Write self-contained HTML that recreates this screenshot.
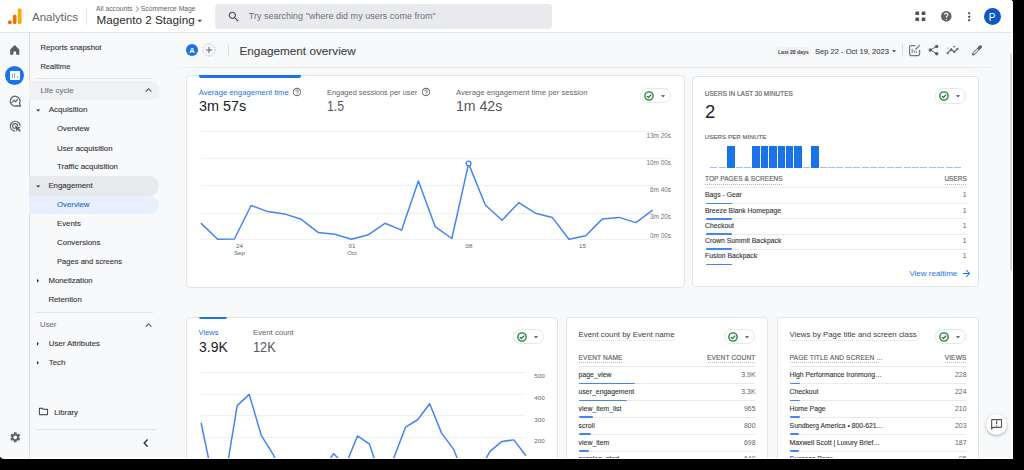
<!DOCTYPE html>
<html><head><meta charset="utf-8"><title>Analytics</title>
<style>
html,body{margin:0;padding:0;width:1024px;height:470px;overflow:hidden;background:#000;}
body{font-family:"Liberation Sans",sans-serif;position:relative;}
.t{position:absolute;line-height:1;white-space:nowrap;}
.sb{-webkit-text-stroke:0.1px currentColor;}
.hd{-webkit-text-stroke:0.15px currentColor;}
.r{position:absolute;}
#screen{position:absolute;left:0;top:0;width:1012px;height:458px;background:#f8f9fa;overflow:hidden;border-bottom-left-radius:6px 1.2px;box-shadow:1px 1px 0 #fff;}
.card{position:absolute;background:#fff;border:1px solid #e3e4e6;border-radius:4px;box-sizing:border-box;}
.pill{position:absolute;background:#fff;border:1px solid #e6e7e9;border-radius:8px;box-sizing:border-box;}
</style></head><body><div id="screen">

<div class="r" style="left:0.00px;top:0.00px;width:1013.00px;height:32.00px;background:#fff;border-bottom:1px solid #e3e4e6;box-sizing:border-box;height:33px;"></div>
<svg class="r" style="left:0;top:0;width:30px;height:30px" viewBox="0 0 30 30"><circle cx="9.85" cy="22.15" r="2.0" fill="#e37400"/><rect x="12.9" y="14.4" width="3.6" height="9.8" rx="1.8" fill="#e37400"/><rect x="17.8" y="8.3" width="3.8" height="15.9" rx="1.9" fill="#f9ab00"/></svg>
<div class="t " style="left:32.00px;top:11.60px;font-size:11.5px;color:#5f6368;font-weight:400;">Analytics</div>
<div class="r" style="left:86.20px;top:8.00px;width:1.00px;height:16.50px;background:#e3e3e3;"></div>
<div class="t " style="left:96.10px;top:6.10px;font-size:6.75px;color:#5f6368;font-weight:400;">All accounts</div>
<svg class="r" style="left:134.5px;top:6px;width:5px;height:6px" viewBox="0 0 5 6"><path d="M1.2 0.7L3.6 3L1.2 5.3" fill="none" stroke="#5f6368" stroke-width="0.9"/></svg>
<div class="t " style="left:140.80px;top:6.10px;font-size:6.75px;color:#5f6368;font-weight:400;">Scommerce Mage</div>
<div class="t " style="left:96.60px;top:13.80px;font-size:11.7px;color:#2a2b2e;font-weight:400;">Magento 2 Staging</div>
<svg class="r" style="left:193.90px;top:14.60px;width:11.50px;height:11.50px;" viewBox="0 0 24 24"><path fill="#444746" d="M7 10l5 5 5-5z"/></svg>
<div class="r" style="left:215.20px;top:3.60px;width:337.00px;height:25.00px;background:#e9eaee;border-radius:4px;"></div>
<svg class="r" style="left:227.00px;top:9.60px;width:13.50px;height:13.50px;" viewBox="0 0 24 24"><path fill="#444746" d="M15.5 14h-.79l-.28-.27C15.41 12.59 16 11.11 16 9.5 16 5.91 13.09 3 9.5 3S3 5.91 3 9.5 5.91 16 9.5 16c1.61 0 3.09-.59 4.23-1.57l.27.28v.79l5 4.99L20.49 19l-4.99-5zm-6 0C7.01 14 5 11.99 5 9.5S7.01 5 9.5 5 14 7.01 14 9.5 11.99 14 9.5 14z"/></svg>
<div class="t " style="left:248.70px;top:12.00px;font-size:9.05px;color:#6d7176;font-weight:400;">Try searching "where did my users come from"</div>
<svg class="r" style="left:910px;top:6px;width:20px;height:20px" viewBox="910 6 20 20"><g fill="#505357"><rect x="915.4" y="11.4" width="3.7" height="3.6" rx="0.5"/><rect x="921.7" y="11.4" width="3.7" height="3.6" rx="0.5"/><rect x="915.4" y="17.5" width="3.7" height="3.6" rx="0.5"/><rect x="921.7" y="17.5" width="3.7" height="3.6" rx="0.5"/></g></svg>
<svg class="r" style="left:939.70px;top:10.00px;width:12.60px;height:12.60px;" viewBox="0 0 24 24"><path fill="#5f6368" d="M12 2C6.48 2 2 6.48 2 12s4.48 10 10 10 10-4.480 10-10S17.52 2 12 2zm1 17h-2v-2h2v2zm2.07-7.75l-.9.92C13.45 12.9 13 13.5 13 15h-2v-.5c0-1.1.45-2.1 1.17-2.83l1.24-1.26c.37-.36.59-.86.59-1.41 0-1.1-.9-2-2-2s-2 .9-2 2H8c0-2.21 1.79-4 4-4s4 1.79 4 4c0 .88-.36 1.68-.93 2.25z"/></svg>
<svg class="r" style="left:960px;top:6px;width:20px;height:20px" viewBox="960 6 20 20"><g fill="#3c4043"><rect x="968.2" y="12.3" width="1.9" height="1.9" rx="0.4"/><rect x="968.2" y="15.8" width="1.9" height="1.9" rx="0.4"/><rect x="968.2" y="19.3" width="1.9" height="1.9" rx="0.4"/></g></svg>
<div class="r" style="left:983.50px;top:7.80px;width:17.20px;height:17.20px;background:#0d5bc0;border-radius:50%;"></div>
<div class="t " style="left:992.20px;top:12.80px;font-size:10px;color:#fff;font-weight:400;width:0;display:flex;justify-content:center;">P</div>
<div class="r" style="left:29.00px;top:33.00px;width:1.00px;height:426.00px;background:#dadce0;"></div>
<svg class="r" style="left:0;top:0;width:30px;height:60px" viewBox="0 0 30 60"><path d="M10.2 49.6L14.75 45.1L19.3 49.6V54.8H16.1V51.6H13.4V54.8H10.2Z" fill="#5b5f64"/></svg>
<div class="r" style="left:5.30px;top:66.00px;width:19.00px;height:19.00px;background:#1a73e8;border-radius:50%;"></div>
<div class="r" style="left:10.00px;top:70.90px;width:9.90px;height:9.30px;background:#fff;border-radius:0.8px;"></div>
<div class="r" style="left:12.10px;top:74.30px;width:1.10px;height:3.70px;background:#7aa7f0;"></div>
<div class="r" style="left:14.30px;top:72.60px;width:1.10px;height:5.40px;background:#7aa7f0;"></div>
<div class="r" style="left:16.50px;top:75.60px;width:1.10px;height:2.40px;background:#7aa7f0;"></div>
<svg class="r" style="left:0;top:90px;width:30px;height:50px" viewBox="0 90 30 50"><path d="M19.6 103.2A4.9 4.9 0 1 0 17.2 105.6L20.3 106.4Z" fill="none" stroke="#5b5f64" stroke-width="1.25" stroke-linejoin="round"/><path d="M11.9 102.6l2.1-2.2 1.6 1.3 2.3-2.5" fill="none" stroke="#5b5f64" stroke-width="1.2"/><path d="M15.2 131.1A4.9 4.9 0 1 1 20.1 126.2" fill="none" stroke="#5b5f64" stroke-width="1.15"/><path d="M15.1 128.6A2.5 2.5 0 1 1 17.6 126.1" fill="none" stroke="#5b5f64" stroke-width="1.1"/><path d="M14.6 125.5L20.8 127.7L18.6 128.5L20.9 130.8L19.8 131.9L17.5 129.6L16.7 131.8Z" fill="#5b5f64"/></svg>
<svg class="r" style="left:8.50px;top:431.30px;width:12.50px;height:12.50px;" viewBox="0 0 24 24"><path fill="#5f6368" d="M19.14 12.94c.04-.3.06-.61.06-.94 0-.32-.02-.64-.07-.94l2.03-1.58c.18-.14.23-.41.12-.61l-1.92-3.32c-.12-.22-.37-.29-.59-.22l-2.39.96c-.5-.38-1.03-.7-1.62-.94l-.36-2.54c-.04-.24-.24-.41-.48-.41h-3.84c-.24 0-.43.17-.47.41l-.36 2.54c-.59.24-1.13.57-1.62.94l-2.39-.96c-.22-.08-.47 0-.59.22L2.74 8.87c-.12.21-.08.47.12.61l2.03 1.58c-.05.3-.09.63-.09.94s.02.64.07.94l-2.03 1.58c-.18.14-.23.41-.12.61l1.92 3.32c.12.22.37.29.59.22l2.39-.96c.5.38 1.030.7 1.62.94l.36 2.54c.05.24.24.41.48.41h3.84c.24 0 .44-.17.47-.41l.36-2.54c.59-.24 1.13-.56 1.62-.94l2.39.96c.22.08.47 0 .59-.22l1.92-3.32c.12-.22.07-.47-.12-.61l-2.01-1.58zM12 15.6c-1.98 0-3.6-1.62-3.6-3.6s1.62-3.6 3.6-3.6 3.6 1.62 3.6 3.6-1.62 3.6-3.6 3.6z"/></svg>
<div class="t sb" style="left:40.40px;top:43.90px;font-size:7.8px;color:#303134;font-weight:400;">Reports snapshot</div>
<div class="t sb" style="left:40.40px;top:62.60px;font-size:7.6px;color:#303134;font-weight:400;">Realtime</div>
<div class="r" style="left:36.00px;top:78.00px;width:117.00px;height:1.00px;background:#e3e3e3;"></div>
<div class="r" style="left:29.00px;top:81.00px;width:131.00px;height:19.00px;background:#f0f1f3;border-radius:0 10px 10px 0;"></div>
<div class="t sb" style="left:40.40px;top:87.10px;font-size:8px;color:#6f7378;font-weight:400;">Life cycle</div>
<svg class="r" style="left:144px;top:86px;width:9px;height:8px" viewBox="0 0 9 8"><path d="M1.6 5.6L4.5 2.8L7.4 5.6" fill="none" stroke="#5f6368" stroke-width="1.3"/></svg>
<svg class="r" style="left:32.60px;top:104.80px;width:10.50px;height:10.50px;" viewBox="0 0 24 24"><path fill="#303134" d="M7 10l5 5 5-5z"/></svg>
<div class="t sb" style="left:48.70px;top:106.30px;font-size:8px;color:#303134;font-weight:400;">Acquisition</div>
<div class="t sb" style="left:57.00px;top:125.40px;font-size:7.8px;color:#303134;font-weight:400;">Overview</div>
<div class="t sb" style="left:57.00px;top:144.60px;font-size:7.8px;color:#303134;font-weight:400;">User acquisition</div>
<div class="t sb" style="left:57.00px;top:163.40px;font-size:7.9px;color:#303134;font-weight:400;">Traffic acquisition</div>
<div class="r" style="left:29.00px;top:176.20px;width:130.00px;height:19.50px;background:#e8e9ec;border-radius:0 10px 10px 0;"></div>
<svg class="r" style="left:32.60px;top:180.60px;width:10.50px;height:10.50px;" viewBox="0 0 24 24"><path fill="#303134" d="M7 10l5 5 5-5z"/></svg>
<div class="t sb" style="left:48.40px;top:182.10px;font-size:7.8px;color:#303134;font-weight:400;">Engagement</div>
<div class="r" style="left:29.00px;top:195.60px;width:130.00px;height:18.90px;background:#e8f0fe;border-radius:0 10px 10px 0;"></div>
<div class="t sb" style="left:57.00px;top:200.90px;font-size:7.8px;color:#1967d2;font-weight:400;">Overview</div>
<div class="t sb" style="left:57.00px;top:220.10px;font-size:7.8px;color:#303134;font-weight:400;">Events</div>
<div class="t sb" style="left:57.00px;top:239.20px;font-size:7.8px;color:#303134;font-weight:400;">Conversions</div>
<div class="t sb" style="left:57.00px;top:258.40px;font-size:7.6px;color:#303134;font-weight:400;">Pages and screens</div>
<svg class="r" style="left:32.80px;top:275.80px;width:9.50px;height:9.50px;" viewBox="0 0 24 24"><path fill="#303134" d="M10 17l5-5-5-5v10z"/></svg>
<div class="t sb" style="left:48.40px;top:277.10px;font-size:7.8px;color:#303134;font-weight:400;">Monetization</div>
<div class="t sb" style="left:48.40px;top:296.30px;font-size:7.8px;color:#303134;font-weight:400;">Retention</div>
<div class="r" style="left:35.60px;top:311.50px;width:117.00px;height:1.00px;background:#e3e3e3;"></div>
<div class="t sb" style="left:40.00px;top:321.20px;font-size:7.8px;color:#6f7378;font-weight:400;">User</div>
<svg class="r" style="left:144px;top:321px;width:9px;height:8px" viewBox="0 0 9 8"><path d="M1.6 5.6L4.5 2.8L7.4 5.6" fill="none" stroke="#5f6368" stroke-width="1.3"/></svg>
<svg class="r" style="left:32.80px;top:338.80px;width:9.50px;height:9.50px;" viewBox="0 0 24 24"><path fill="#303134" d="M10 17l5-5-5-5v10z"/></svg>
<div class="t sb" style="left:48.80px;top:339.90px;font-size:7.8px;color:#303134;font-weight:400;">User Attributes</div>
<svg class="r" style="left:32.80px;top:358.30px;width:9.50px;height:9.50px;" viewBox="0 0 24 24"><path fill="#303134" d="M10 17l5-5-5-5v10z"/></svg>
<div class="t sb" style="left:48.80px;top:359.40px;font-size:7.8px;color:#303134;font-weight:400;">Tech</div>
<svg class="r" style="left:37.50px;top:405.50px;width:11.00px;height:11.00px;" viewBox="0 0 24 24"><path fill="#303134" d="M9.17 6l2 2H20v10H4V6h5.17M10 4H4c-1.1 0-1.99.9-1.99 2L2 18c0 1.1.9 2 2 2h16c1.1 0 2-.9 2-2V8c0-1.1-.9-2-2-2h-8l-2-2z"/></svg>
<div class="t sb" style="left:54.20px;top:408.60px;font-size:7.8px;color:#303134;font-weight:400;">Library</div>
<div class="r" style="left:36.00px;top:428.50px;width:121.00px;height:1.00px;background:#e3e3e3;"></div>
<svg class="r" style="left:141px;top:438px;width:9px;height:10px" viewBox="0 0 9 10"><path d="M6.6 1.6L3.2 5L6.6 8.4" fill="none" stroke="#303134" stroke-width="1.4"/></svg>
<div class="r" style="left:169.50px;top:67.00px;width:835.00px;height:1.00px;background:linear-gradient(90deg,rgba(218,220,224,0),#e3e4e6 40px,#e3e4e6 795px,rgba(218,220,224,0));"></div>
<div class="r" style="left:185.70px;top:43.80px;width:12.70px;height:12.70px;background:#1a73e8;border-radius:50%;"></div>
<div class="t " style="left:92.05px;width:200px;text-align:center;top:47.30px;font-size:7.5px;color:#fff;font-weight:700;">A</div>
<svg class="r" style="left:202px;top:43px;width:14px;height:14px" viewBox="0 0 14 14"><circle cx="7" cy="7" r="6.1" fill="none" stroke="#aeb2b7" stroke-width="0.9" stroke-dasharray="1 0.9"/><path d="M7 3.9V10.1M3.9 7H10.1" stroke="#5f6368" stroke-width="1"/></svg>
<div class="r" style="left:228.00px;top:44.00px;width:1.00px;height:11.50px;background:#dadce0;"></div>
<div class="t sb" style="left:239.50px;top:45.10px;font-size:11.75px;color:#3c4043;font-weight:400;">Engagement overview</div>
<div class="r" style="left:776.10px;top:47.10px;width:35.20px;height:8.70px;background:#f0f1f3;border-radius:2px;"></div>
<div class="t " style="left:778.00px;top:49.80px;font-size:5.1px;color:#444746;font-weight:700;">Last 28 days</div>
<div class="t " style="left:815.00px;top:48.20px;font-size:7.55px;color:#3c4043;font-weight:400;-webkit-text-stroke:0.1px #3c4043;">Sep 22 - Oct 19, 2023</div>
<svg class="r" style="left:889.40px;top:45.50px;width:10.00px;height:10.00px;" viewBox="0 0 24 24"><path fill="#3c4043" d="M7 10l5 5 5-5z"/></svg>
<div class="r" style="left:902.00px;top:44.30px;width:1.00px;height:11.70px;background:#dadce0;"></div>
<svg class="r" style="left:0;top:0;width:1013px;height:80px" viewBox="0 0 1013 80"><path d="M915.5 45.5H911a1.4 1.4 0 0 0-1.4 1.4v7.2a1.4 1.4 0 0 0 1.4 1.4h7.2a1.4 1.4 0 0 0 1.4-1.4v-4.2" fill="none" stroke="#74787d" stroke-width="1.25"/><path d="M912.2 52.9v-4.1M914.2 52.9v-2.4M916.2 52.9v-2.1" stroke="#74787d" stroke-width="0.95"/><path d="M915.3 49.5l4.6-4.4" stroke="#74787d" stroke-width="1.3"/><path d="M930.4 50L936.7 46.4M930.4 50L936.7 53.8" stroke="#5f6368" stroke-width="1.0"/><circle cx="936.7" cy="46.4" r="1.75" fill="#5f6368"/><circle cx="930.3" cy="50" r="1.75" fill="#5f6368"/><circle cx="936.7" cy="53.8" r="1.75" fill="#5f6368"/><path d="M947.6 53.2L951.3 49.2L954.2 52.1L957.5 48.8" fill="none" stroke="#5f6368" stroke-width="1.25" stroke-linejoin="round"/><circle cx="947.6" cy="53.2" r="1.05" fill="#5f6368"/><circle cx="951.3" cy="49.2" r="1.0" fill="#5f6368"/><circle cx="954.2" cy="52.1" r="1.0" fill="#5f6368"/><circle cx="957.5" cy="48.8" r="1.05" fill="#5f6368"/><circle cx="948" cy="48.1" r="0.7" fill="#80868b"/><circle cx="954.2" cy="46.6" r="0.95" fill="#5f6368"/><path d="M973.4 54.0L980.3 47.0" stroke="#5f6368" stroke-width="2.9" stroke-linecap="round"/><path d="M973.9 53.5L979.8 47.5" stroke="#f8f9fa" stroke-width="1.1" stroke-linecap="round"/><path d="M979.0 48.3L980.5 46.8" stroke="#5f6368" stroke-width="2.9" stroke-linecap="round"/></svg>
<div class="r" style="left:1010.00px;top:52.80px;width:2.60px;height:218.50px;background:#dadce0;border-radius:0 0 1px 1px;"></div>
<div class="card" style="left:185.5px;top:75.2px;width:499.2px;height:212.4px;"></div>
<div class="r" style="left:199.00px;top:75.30px;width:102.00px;height:2.90px;background:#1a73e8;border-radius:0 0 2px 2px;"></div>
<div class="t " style="left:198.70px;top:89.10px;font-size:7.7px;color:#1a73e8;font-weight:400;">Average engagement time</div>
<svg class="r" style="left:292.00px;top:87.30px;width:10.00px;height:10.00px;" viewBox="0 0 24 24"><path fill="#5f6368" d="M11 18h2v-2h-2v2zm1-16C6.48 2 2 6.48 2 12s4.48 10 10 10 10-4.48 10-10S17.52 2 12 2zm0 18c-4.41 0-8-3.59-8-8s3.59-8 8-8 8 3.59 8 8-3.59 8-8 8zm0-14c-2.21 0-4 1.79-4 4h2c0-1.1.9-2 2-2s2 .9 2 2c0 2-3 1.75-3 5h2c0-2.25 3-2.5 3-5 0-2.21-1.79-4-4-4z"/></svg>
<div class="t " style="left:198.70px;top:98.30px;font-size:15px;color:#202124;font-weight:400;transform:scaleX(0.96);transform-origin:0 0;">3m 57s</div>
<div class="t " style="left:327.00px;top:89.10px;font-size:7.45px;color:#5f6368;font-weight:400;">Engaged sessions per user</div>
<svg class="r" style="left:421.00px;top:87.30px;width:10.00px;height:10.00px;" viewBox="0 0 24 24"><path fill="#5f6368" d="M11 18h2v-2h-2v2zm1-16C6.48 2 2 6.48 2 12s4.48 10 10 10 10-4.48 10-10S17.52 2 12 2zm0 18c-4.41 0-8-3.59-8-8s3.59-8 8-8 8 3.59 8 8-3.59 8-8 8zm0-14c-2.21 0-4 1.79-4 4h2c0-1.1.9-2 2-2s2 .9 2 2c0 2-3 1.75-3 5h2c0-2.25 3-2.5 3-5 0-2.21-1.79-4-4-4z"/></svg>
<div class="t " style="left:327.30px;top:98.30px;font-size:15px;color:#54585d;font-weight:400;transform:scaleX(0.82);transform-origin:0 0;">1.5</div>
<div class="t " style="left:456.00px;top:89.10px;font-size:7.7px;color:#5f6368;font-weight:400;">Average engagement time per session</div>
<div class="t " style="left:456.00px;top:98.30px;font-size:15px;color:#54585d;font-weight:400;transform:scaleX(0.94);transform-origin:0 0;">1m 42s</div>
<div class="pill" style="left:639.60px;top:88.10px;width:31.3px;height:15.3px;"></div><svg class="r" style="left:643.80px;top:90.70px;width:10px;height:10px" viewBox="0 0 10 10"><circle cx="5" cy="5" r="4.15" fill="none" stroke="#1e7e34" stroke-width="1.35"/><path d="M2.9 5.1l1.45 1.45 2.9-2.9" fill="none" stroke="#1e7e34" stroke-width="1.25"/></svg><svg class="r" style="left:657.60px;top:90.70px;width:10.00px;height:10.00px;" viewBox="0 0 24 24"><path fill="#444746" d="M7 10l5 5 5-5z"/></svg>
<div class="r" style="left:200.90px;top:130.60px;width:470.00px;height:1.00px;background:#f0f1f3;"></div>
<div class="r" style="left:200.90px;top:158.20px;width:470.00px;height:1.00px;background:#f0f1f3;"></div>
<div class="r" style="left:200.90px;top:185.40px;width:470.00px;height:1.00px;background:#f0f1f3;"></div>
<div class="r" style="left:200.90px;top:212.50px;width:470.00px;height:1.00px;background:#f0f1f3;"></div>
<div class="r" style="left:200.90px;top:238.70px;width:470.00px;height:1.00px;background:#f0f1f3;"></div>
<div class="t " style="right:341.00px;top:132.90px;font-size:6.4px;color:#6f7378;font-weight:400;">13m 20s</div>
<div class="t " style="right:341.00px;top:159.70px;font-size:6.4px;color:#6f7378;font-weight:400;">10m 00s</div>
<div class="t " style="right:341.00px;top:187.40px;font-size:6.4px;color:#6f7378;font-weight:400;">6m 40s</div>
<div class="t " style="right:341.00px;top:213.70px;font-size:6.4px;color:#6f7378;font-weight:400;">3m 20s</div>
<div class="t " style="right:341.00px;top:232.50px;font-size:6.4px;color:#6f7378;font-weight:400;">0m 00s</div>
<div class="t " style="left:139.50px;width:200px;text-align:center;top:242.70px;font-size:6.2px;color:#5f6368;font-weight:400;">24</div>
<div class="t " style="left:139.50px;width:200px;text-align:center;top:249.50px;font-size:6.2px;color:#5f6368;font-weight:400;">Sep</div>
<div class="t " style="left:252.00px;width:200px;text-align:center;top:242.70px;font-size:6.2px;color:#5f6368;font-weight:400;">01</div>
<div class="t " style="left:252.00px;width:200px;text-align:center;top:249.50px;font-size:6.2px;color:#5f6368;font-weight:400;">Oct</div>
<div class="t " style="left:369.00px;width:200px;text-align:center;top:242.70px;font-size:6.2px;color:#5f6368;font-weight:400;">08</div>
<div class="t " style="left:482.50px;width:200px;text-align:center;top:242.70px;font-size:6.2px;color:#5f6368;font-weight:400;">15</div>
<svg class="r" style="left:0;top:0;width:1013px;height:459px" viewBox="0 0 1013 459"><polyline points="200.90,223.10 217.63,239.20 234.36,239.00 251.09,205.50 267.82,211.60 284.55,213.90 301.28,219.30 318.01,232.40 334.74,234.30 351.47,239.20 368.20,234.80 384.93,223.30 401.66,230.10 418.39,181.10 435.12,226.60 451.85,238.50 468.58,163.60 485.31,205.00 502.04,220.30 518.77,202.70 535.50,213.20 552.23,217.40 568.96,239.20 585.69,235.70 602.42,218.90 619.15,217.40 635.88,222.60 652.61,210.20" fill="none" stroke="#4285f4" stroke-width="1.5" stroke-linejoin="round"/><circle cx="468.58" cy="163.6" r="2.4" fill="#fff" stroke="#4285f4" stroke-width="1.3"/></svg>
<div class="card" style="left:692.2px;top:75.6px;width:287.3px;height:211.8px;"></div>
<div class="t hd" style="left:704.80px;top:91.00px;font-size:6.4px;color:#5f6368;font-weight:400;letter-spacing:0.03px;">USERS IN LAST 30 MINUTES</div>
<div class="pill" style="left:934.80px;top:88.40px;width:31.3px;height:15.3px;"></div><svg class="r" style="left:939.00px;top:91.00px;width:10px;height:10px" viewBox="0 0 10 10"><circle cx="5" cy="5" r="4.15" fill="none" stroke="#1e7e34" stroke-width="1.35"/><path d="M2.9 5.1l1.45 1.45 2.9-2.9" fill="none" stroke="#1e7e34" stroke-width="1.25"/></svg><svg class="r" style="left:952.80px;top:91.00px;width:10.00px;height:10.00px;" viewBox="0 0 24 24"><path fill="#444746" d="M7 10l5 5 5-5z"/></svg>
<div class="t " style="left:705.00px;top:103.00px;font-size:18.5px;color:#202124;font-weight:400;">2</div>
<div class="t hd" style="left:704.80px;top:134.00px;font-size:6.2px;color:#5f6368;font-weight:400;letter-spacing:0.03px;">USERS PER MINUTE</div>
<div class="r" style="left:710.30px;top:166.70px;width:7.00px;height:1.00px;background:#9ec1f7;"></div>
<div class="r" style="left:718.70px;top:166.70px;width:7.00px;height:1.00px;background:#9ec1f7;"></div>
<div class="r" style="left:727.20px;top:146.00px;width:7.40px;height:21.80px;background:#1a73e8;"></div>
<div class="r" style="left:735.50px;top:166.70px;width:7.00px;height:1.00px;background:#9ec1f7;"></div>
<div class="r" style="left:743.90px;top:166.70px;width:7.00px;height:1.00px;background:#9ec1f7;"></div>
<div class="r" style="left:752.40px;top:146.00px;width:7.40px;height:21.80px;background:#1a73e8;"></div>
<div class="r" style="left:760.80px;top:146.00px;width:7.40px;height:21.80px;background:#1a73e8;"></div>
<div class="r" style="left:769.20px;top:146.00px;width:7.40px;height:21.80px;background:#1a73e8;"></div>
<div class="r" style="left:777.60px;top:146.00px;width:7.40px;height:21.80px;background:#1a73e8;"></div>
<div class="r" style="left:786.00px;top:146.00px;width:7.40px;height:21.80px;background:#1a73e8;"></div>
<div class="r" style="left:794.40px;top:146.00px;width:7.40px;height:21.80px;background:#1a73e8;"></div>
<div class="r" style="left:802.70px;top:166.70px;width:7.00px;height:1.00px;background:#9ec1f7;"></div>
<div class="r" style="left:811.20px;top:146.00px;width:7.40px;height:21.80px;background:#1a73e8;"></div>
<div class="r" style="left:819.50px;top:166.70px;width:7.00px;height:1.00px;background:#9ec1f7;"></div>
<div class="r" style="left:827.90px;top:166.70px;width:7.00px;height:1.00px;background:#9ec1f7;"></div>
<div class="r" style="left:836.30px;top:166.70px;width:7.00px;height:1.00px;background:#9ec1f7;"></div>
<div class="r" style="left:844.70px;top:166.70px;width:7.00px;height:1.00px;background:#9ec1f7;"></div>
<div class="r" style="left:853.10px;top:166.70px;width:7.00px;height:1.00px;background:#9ec1f7;"></div>
<div class="r" style="left:861.50px;top:166.70px;width:7.00px;height:1.00px;background:#9ec1f7;"></div>
<div class="r" style="left:869.90px;top:166.70px;width:7.00px;height:1.00px;background:#9ec1f7;"></div>
<div class="r" style="left:878.30px;top:166.70px;width:7.00px;height:1.00px;background:#9ec1f7;"></div>
<div class="r" style="left:886.70px;top:166.70px;width:7.00px;height:1.00px;background:#9ec1f7;"></div>
<div class="r" style="left:895.10px;top:166.70px;width:7.00px;height:1.00px;background:#9ec1f7;"></div>
<div class="r" style="left:903.50px;top:166.70px;width:7.00px;height:1.00px;background:#9ec1f7;"></div>
<div class="r" style="left:911.90px;top:166.70px;width:7.00px;height:1.00px;background:#9ec1f7;"></div>
<div class="r" style="left:920.30px;top:166.70px;width:7.00px;height:1.00px;background:#9ec1f7;"></div>
<div class="r" style="left:928.70px;top:166.70px;width:7.00px;height:1.00px;background:#9ec1f7;"></div>
<div class="r" style="left:937.10px;top:166.70px;width:7.00px;height:1.00px;background:#9ec1f7;"></div>
<div class="r" style="left:945.50px;top:166.70px;width:7.00px;height:1.00px;background:#9ec1f7;"></div>
<div class="r" style="left:953.90px;top:166.70px;width:7.00px;height:1.00px;background:#9ec1f7;"></div>
<div class="t hd" style="left:705.00px;top:176.20px;font-size:6.5px;color:#5f6368;font-weight:400;letter-spacing:0.08px;">TOP PAGES &amp; SCREENS</div>
<div class="r" style="left:705.00px;top:183.80px;width:77.70px;height:1.00px;background:repeating-linear-gradient(90deg,#b5b9be 0 1px,transparent 1px 2px);"></div>
<div class="t hd" style="right:45.20px;top:176.20px;font-size:6.5px;color:#5f6368;font-weight:400;letter-spacing:0.0px;">USERS</div>
<div class="r" style="left:944.60px;top:183.80px;width:22.20px;height:1.00px;background:repeating-linear-gradient(90deg,#b5b9be 0 1px,transparent 1px 2px);"></div>
<div class="r" style="left:705.00px;top:186.90px;width:261.80px;height:1.00px;background:#e8eaed;"></div>
<div class="t sb" style="left:705.00px;top:192.40px;font-size:6.85px;color:#303134;font-weight:400;">Bags - Gear</div>
<div class="t " style="right:45.50px;top:192.40px;font-size:6.85px;color:#5f6368;font-weight:400;">1</div>
<div class="r" style="left:705.00px;top:203.10px;width:261.80px;height:1.00px;background:#e8eaed;"></div>
<div class="t sb" style="left:705.00px;top:207.80px;font-size:6.85px;color:#303134;font-weight:400;">Breeze Blank Homepage</div>
<div class="t " style="right:45.50px;top:207.80px;font-size:6.85px;color:#5f6368;font-weight:400;">1</div>
<div class="r" style="left:705.00px;top:218.30px;width:261.80px;height:1.00px;background:#e8eaed;"></div>
<div class="t sb" style="left:705.00px;top:223.00px;font-size:6.85px;color:#303134;font-weight:400;">Checkout</div>
<div class="t " style="right:45.50px;top:223.00px;font-size:6.85px;color:#5f6368;font-weight:400;">1</div>
<div class="r" style="left:705.00px;top:233.50px;width:261.80px;height:1.00px;background:#e8eaed;"></div>
<div class="t sb" style="left:705.00px;top:238.20px;font-size:6.85px;color:#303134;font-weight:400;">Crown Summit Backpack</div>
<div class="t " style="right:45.50px;top:238.20px;font-size:6.85px;color:#5f6368;font-weight:400;">1</div>
<div class="r" style="left:705.00px;top:248.90px;width:261.80px;height:1.00px;background:#e8eaed;"></div>
<div class="t sb" style="left:705.00px;top:253.40px;font-size:6.85px;color:#303134;font-weight:400;">Fusion Backpack</div>
<div class="t " style="right:45.50px;top:253.40px;font-size:6.85px;color:#5f6368;font-weight:400;">1</div>
<div class="r" style="left:705.50px;top:202.60px;width:26.50px;height:1.70px;background:#4285f4;border-radius:1px;"></div>
<div class="r" style="left:705.50px;top:218.00px;width:26.50px;height:1.70px;background:#4285f4;border-radius:1px;"></div>
<div class="r" style="left:705.50px;top:233.20px;width:26.50px;height:1.70px;background:#4285f4;border-radius:1px;"></div>
<div class="r" style="left:705.50px;top:248.40px;width:26.50px;height:1.70px;background:#4285f4;border-radius:1px;"></div>
<div class="r" style="left:705.50px;top:263.60px;width:26.50px;height:1.70px;background:#4285f4;border-radius:1px;"></div>
<div class="t " style="left:909.40px;top:270.30px;font-size:8px;color:#1a73e8;font-weight:400;">View realtime</div>
<svg class="r" style="left:960.50px;top:267.80px;width:11.00px;height:11.00px;" viewBox="0 0 24 24"><path fill="#1a73e8" d="M12 4l-1.41 1.41L16.17 11H4v2h12.17l-5.58 5.59L12 20l8-8z"/></svg>
<div class="card" style="left:186px;top:316.7px;width:371.5px;height:200px;"></div>
<div class="r" style="left:199.20px;top:316.90px;width:27.70px;height:2.20px;background:#1a73e8;border-radius:0 0 2px 2px;"></div>
<div class="t " style="left:198.60px;top:328.90px;font-size:7.5px;color:#1a73e8;font-weight:400;">Views</div>
<div class="t " style="left:198.70px;top:339.10px;font-size:15px;color:#202124;font-weight:400;transform:scaleX(0.93);transform-origin:0 0;">3.9K</div>
<div class="t " style="left:253.10px;top:328.90px;font-size:7.7px;color:#5f6368;font-weight:400;">Event count</div>
<div class="t " style="left:253.30px;top:339.10px;font-size:15px;color:#54585d;font-weight:400;transform:scaleX(0.85);transform-origin:0 0;">12K</div>
<div class="pill" style="left:512.80px;top:329.10px;width:31.3px;height:15.3px;"></div><svg class="r" style="left:517.00px;top:331.70px;width:10px;height:10px" viewBox="0 0 10 10"><circle cx="5" cy="5" r="4.15" fill="none" stroke="#1e7e34" stroke-width="1.35"/><path d="M2.9 5.1l1.45 1.45 2.9-2.9" fill="none" stroke="#1e7e34" stroke-width="1.25"/></svg><svg class="r" style="left:530.80px;top:331.70px;width:10.00px;height:10.00px;" viewBox="0 0 24 24"><path fill="#444746" d="M7 10l5 5 5-5z"/></svg>
<div class="r" style="left:201.20px;top:371.80px;width:325.20px;height:1.00px;background:#f0f1f3;"></div>
<div class="r" style="left:201.20px;top:393.50px;width:325.20px;height:1.00px;background:#f0f1f3;"></div>
<div class="r" style="left:201.20px;top:414.80px;width:325.20px;height:1.00px;background:#f0f1f3;"></div>
<div class="r" style="left:201.20px;top:436.70px;width:325.20px;height:1.00px;background:#f0f1f3;"></div>
<div class="t " style="left:534.30px;top:373.20px;font-size:6.2px;color:#5f6368;font-weight:400;">500</div>
<div class="t " style="left:534.30px;top:394.90px;font-size:6.2px;color:#5f6368;font-weight:400;">400</div>
<div class="t " style="left:534.30px;top:416.80px;font-size:6.2px;color:#5f6368;font-weight:400;">300</div>
<div class="t " style="left:534.30px;top:438.10px;font-size:6.2px;color:#5f6368;font-weight:400;">200</div>
<svg class="r" style="left:0;top:0;width:1013px;height:459px" viewBox="0 0 1013 459"><polyline points="201.10,422.77 213.13,480.60 225.16,478.43 237.19,405.66 249.22,394.39 261.25,435.33 273.28,454.61 285.31,480.60 297.34,474.10 309.37,476.27 321.40,474.10 333.43,453.53 345.46,465.44 357.49,435.98 369.52,444.21 381.55,480.60 393.58,458.51 405.61,427.10 417.64,419.74 429.67,403.71 441.70,433.38 453.73,449.41 465.76,480.60 477.79,473.67 489.82,451.58 501.85,441.40 513.88,439.88 525.91,455.69" fill="none" stroke="#4285f4" stroke-width="1.5" stroke-linejoin="round"/></svg>
<div class="card" style="left:566px;top:316.7px;width:202px;height:200px;"></div>
<div class="t " style="left:578.60px;top:331.30px;font-size:7.85px;color:#3c4043;font-weight:400;">Event count by Event name</div>
<div class="r" style="left:578.60px;top:339.60px;width:96.00px;height:1.00px;background:repeating-linear-gradient(90deg,#dadce0 0 1px,transparent 1px 2px);"></div>
<div class="pill" style="left:724.20px;top:329.10px;width:31.3px;height:15.3px;"></div><svg class="r" style="left:728.40px;top:331.70px;width:10px;height:10px" viewBox="0 0 10 10"><circle cx="5" cy="5" r="4.15" fill="none" stroke="#1e7e34" stroke-width="1.35"/><path d="M2.9 5.1l1.45 1.45 2.9-2.9" fill="none" stroke="#1e7e34" stroke-width="1.25"/></svg><svg class="r" style="left:742.20px;top:331.70px;width:10.00px;height:10.00px;" viewBox="0 0 24 24"><path fill="#444746" d="M7 10l5 5 5-5z"/></svg>
<div class="t hd" style="left:578.60px;top:355.20px;font-size:6.6px;color:#5f6368;font-weight:400;letter-spacing:0.12px;">EVENT NAME</div>
<div class="r" style="left:578.60px;top:362.40px;width:43.60px;height:1.00px;background:repeating-linear-gradient(90deg,#b5b9be 0 1px,transparent 1px 2px);"></div>
<div class="t hd" style="right:256.50px;top:355.20px;font-size:6.6px;color:#5f6368;font-weight:400;letter-spacing:0.12px;">EVENT COUNT</div>
<div class="r" style="left:707.90px;top:362.40px;width:47.60px;height:1.00px;background:repeating-linear-gradient(90deg,#b5b9be 0 1px,transparent 1px 2px);"></div>
<div class="r" style="left:578.60px;top:365.90px;width:176.90px;height:1.00px;background:#e8eaed;"></div>
<div class="t sb" style="left:578.60px;top:372.30px;font-size:6.9px;color:#303134;font-weight:400;">page_view</div>
<div class="t " style="right:256.50px;top:372.30px;font-size:6.9px;color:#5f6368;font-weight:400;">3.9K</div>
<div class="r" style="left:578.60px;top:383.30px;width:176.90px;height:1.00px;background:#e8eaed;"></div>
<div class="t sb" style="left:578.60px;top:389.30px;font-size:6.9px;color:#303134;font-weight:400;">user_engagement</div>
<div class="t " style="right:256.50px;top:389.30px;font-size:6.9px;color:#5f6368;font-weight:400;">3.3K</div>
<div class="r" style="left:578.60px;top:400.10px;width:176.90px;height:1.00px;background:#e8eaed;"></div>
<div class="t sb" style="left:578.60px;top:406.30px;font-size:6.9px;color:#303134;font-weight:400;">view_item_list</div>
<div class="t " style="right:256.50px;top:406.30px;font-size:6.9px;color:#5f6368;font-weight:400;">965</div>
<div class="r" style="left:578.60px;top:416.90px;width:176.90px;height:1.00px;background:#e8eaed;"></div>
<div class="t sb" style="left:578.60px;top:423.10px;font-size:6.9px;color:#303134;font-weight:400;">scroll</div>
<div class="t " style="right:256.50px;top:423.10px;font-size:6.9px;color:#5f6368;font-weight:400;">800</div>
<div class="r" style="left:578.60px;top:434.00px;width:176.90px;height:1.00px;background:#e8eaed;"></div>
<div class="t sb" style="left:578.60px;top:440.10px;font-size:6.9px;color:#303134;font-weight:400;">view_item</div>
<div class="t " style="right:256.50px;top:440.10px;font-size:6.9px;color:#5f6368;font-weight:400;">698</div>
<div class="r" style="left:578.60px;top:451.00px;width:176.90px;height:1.00px;background:#e8eaed;"></div>
<div class="t sb" style="left:578.60px;top:456.20px;font-size:6.9px;color:#303134;font-weight:400;">session_start</div>
<div class="t " style="right:256.50px;top:456.20px;font-size:6.9px;color:#5f6368;font-weight:400;">649</div>
<div class="r" style="left:578.90px;top:382.70px;width:56.40px;height:1.80px;background:#4285f4;border-radius:1px;"></div>
<div class="r" style="left:578.90px;top:399.50px;width:48.30px;height:1.80px;background:#4285f4;border-radius:1px;"></div>
<div class="r" style="left:578.90px;top:416.30px;width:13.90px;height:1.80px;background:#4285f4;border-radius:1px;"></div>
<div class="r" style="left:578.90px;top:433.40px;width:12.20px;height:1.80px;background:#4285f4;border-radius:1px;"></div>
<div class="r" style="left:578.90px;top:450.40px;width:10.20px;height:1.80px;background:#4285f4;border-radius:1px;"></div>
<div class="card" style="left:777px;top:316.7px;width:202px;height:200px;"></div>
<div class="t " style="left:789.60px;top:331.30px;font-size:7.85px;color:#3c4043;font-weight:400;">Views by Page title and screen class</div>
<div class="r" style="left:789.60px;top:339.60px;width:127.60px;height:1.00px;background:repeating-linear-gradient(90deg,#dadce0 0 1px,transparent 1px 2px);"></div>
<div class="pill" style="left:935.20px;top:329.10px;width:31.3px;height:15.3px;"></div><svg class="r" style="left:939.40px;top:331.70px;width:10px;height:10px" viewBox="0 0 10 10"><circle cx="5" cy="5" r="4.15" fill="none" stroke="#1e7e34" stroke-width="1.35"/><path d="M2.9 5.1l1.45 1.45 2.9-2.9" fill="none" stroke="#1e7e34" stroke-width="1.25"/></svg><svg class="r" style="left:953.20px;top:331.70px;width:10.00px;height:10.00px;" viewBox="0 0 24 24"><path fill="#444746" d="M7 10l5 5 5-5z"/></svg>
<div class="t hd" style="left:789.60px;top:355.20px;font-size:6.6px;color:#5f6368;font-weight:400;letter-spacing:0.12px;">PAGE TITLE AND SCREEN …</div>
<div class="r" style="left:789.60px;top:362.40px;width:90.40px;height:1.00px;background:repeating-linear-gradient(90deg,#b5b9be 0 1px,transparent 1px 2px);"></div>
<div class="t hd" style="right:45.50px;top:355.20px;font-size:6.6px;color:#5f6368;font-weight:400;letter-spacing:0.12px;">VIEWS</div>
<div class="r" style="left:945.20px;top:362.40px;width:21.30px;height:1.00px;background:repeating-linear-gradient(90deg,#b5b9be 0 1px,transparent 1px 2px);"></div>
<div class="r" style="left:789.60px;top:365.90px;width:176.90px;height:1.00px;background:#e8eaed;"></div>
<div class="t sb" style="left:789.60px;top:372.30px;font-size:6.8px;color:#303134;font-weight:400;">High Performance Ironmong…</div>
<div class="t " style="right:45.50px;top:372.30px;font-size:6.9px;color:#5f6368;font-weight:400;">228</div>
<div class="r" style="left:789.60px;top:383.30px;width:176.90px;height:1.00px;background:#e8eaed;"></div>
<div class="t sb" style="left:789.60px;top:389.30px;font-size:6.8px;color:#303134;font-weight:400;">Checkout</div>
<div class="t " style="right:45.50px;top:389.30px;font-size:6.9px;color:#5f6368;font-weight:400;">224</div>
<div class="r" style="left:789.60px;top:400.10px;width:176.90px;height:1.00px;background:#e8eaed;"></div>
<div class="t sb" style="left:789.60px;top:406.30px;font-size:6.8px;color:#303134;font-weight:400;">Home Page</div>
<div class="t " style="right:45.50px;top:406.30px;font-size:6.9px;color:#5f6368;font-weight:400;">210</div>
<div class="r" style="left:789.60px;top:416.90px;width:176.90px;height:1.00px;background:#e8eaed;"></div>
<div class="t sb" style="left:789.60px;top:423.10px;font-size:6.8px;color:#303134;font-weight:400;">Sundberg America • 800-621…</div>
<div class="t " style="right:45.50px;top:423.10px;font-size:6.9px;color:#5f6368;font-weight:400;">203</div>
<div class="r" style="left:789.60px;top:434.00px;width:176.90px;height:1.00px;background:#e8eaed;"></div>
<div class="t sb" style="left:789.60px;top:440.10px;font-size:6.8px;color:#303134;font-weight:400;">Maxwell Scott | Luxury Brief…</div>
<div class="t " style="right:45.50px;top:440.10px;font-size:6.9px;color:#5f6368;font-weight:400;">187</div>
<div class="r" style="left:789.60px;top:451.00px;width:176.90px;height:1.00px;background:#e8eaed;"></div>
<div class="t sb" style="left:789.60px;top:456.20px;font-size:6.8px;color:#303134;font-weight:400;">Success Page</div>
<div class="t " style="right:45.50px;top:456.20px;font-size:6.9px;color:#5f6368;font-weight:400;">95</div>
<div class="r" style="left:789.90px;top:382.70px;width:10.60px;height:1.80px;background:#4285f4;border-radius:1px;"></div>
<div class="r" style="left:789.90px;top:399.50px;width:10.20px;height:1.80px;background:#4285f4;border-radius:1px;"></div>
<div class="r" style="left:789.90px;top:416.30px;width:9.80px;height:1.80px;background:#4285f4;border-radius:1px;"></div>
<div class="r" style="left:789.90px;top:433.40px;width:9.50px;height:1.80px;background:#4285f4;border-radius:1px;"></div>
<div class="r" style="left:789.90px;top:450.40px;width:8.70px;height:1.80px;background:#4285f4;border-radius:1px;"></div>
<div class="r" style="left:985.80px;top:413.50px;width:21.00px;height:21.00px;background:#fff;border-radius:50%;box-shadow:0 1px 3px rgba(60,64,67,0.3),0 1px 2px rgba(60,64,67,0.15);"></div>
<svg class="r" style="left:989.60px;top:418.10px;width:13.20px;height:13.20px;" viewBox="0 0 24 24"><path fill="#505357" d="M20 2H4c-1.1 0-1.99.9-1.99 2L2 22l4-4h14c1.1 0 2-.9 2-2V4c0-1.1-.9-2-2-2zm0 14H5.17l-.59.59-.58.58V4h16v12zM11 5h2v6h-2zm0 8h2v2h-2z"/></svg>
</div></body></html>
